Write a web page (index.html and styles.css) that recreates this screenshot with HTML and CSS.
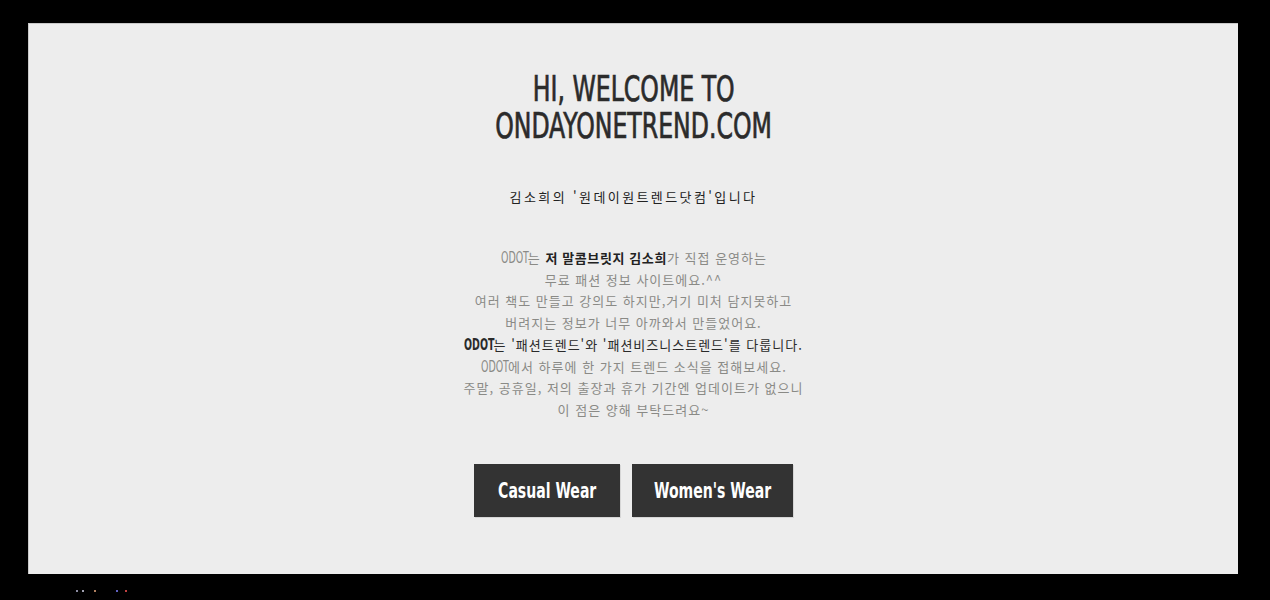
FILE: index.html
```html
<!DOCTYPE html>
<html lang="ko">
<head>
<meta charset="utf-8">
<title>ONDAYONETREND.COM</title>
<link rel="stylesheet" href="styles.css">
</head>
<body>
<main class="panel">
  <h1 class="title"><span>HI, WELCOME TO</span><span>ONDAYONETREND.COM</span></h1>
  <p class="sub">김소희의 '원데이원트렌드닷컴'입니다</p>
  <div class="intro">
    <p><span class="odot">ODOT</span>는 <b>저 말콤브릿지 김소희</b>가 직접 운영하는</p>
    <p>무료 패션 정보 사이트에요.^^</p>
    <p>여러 책도 만들고 강의도 하지만,거기 미처 담지못하고</p>
    <p>버려지는 정보가 너무 아까와서 만들었어요.</p>
    <p class="dark"><span class="odot bold">ODOT</span>는 '패션트렌드'와 '패션비즈니스트렌드'를 다룹니다.</p>
    <p><span class="odot">ODOT</span>에서 하루에 한 가지 트렌드 소식을 접해보세요.</p>
    <p>주말, 공휴일, 저의 출장과 휴가 기간엔 업데이트가 없으니</p>
    <p>이 점은 양해 부탁드려요~</p>
  </div>
  <nav class="buttons">
    <a class="btn btn-casual" href="#"><span>Casual Wear</span></a>
    <a class="btn btn-women" href="#"><span>Women's Wear</span></a>
  </nav>
</main>
<footer class="foot"><i class="d d1"></i><i class="d d2"></i><i class="d d3"></i><i class="d d4"></i><i class="d d5"></i></footer>
</body>
</html>
```

FILE: styles.css
```css
html, body { margin: 0; padding: 0; }
body {
  background: #000;
  width: 1270px;
  height: 600px;
  overflow: hidden;
  font-family: "Noto Sans CJK KR", "Noto Sans", sans-serif;
}
.panel {
  box-sizing: border-box;
  margin: 23px 0 0 28px;
  width: 1210px;
  height: 551px;
  background: #ededed;
  border-top: 1px solid #c9c9c9;
  border-left: 1px solid #c9c9c9;
  display: flex;
  flex-direction: column;
  align-items: center;
  padding-top: 47px;
}
.title {
  margin: 0;
  display: flex;
  flex-direction: column;
  align-items: center;
  font-family: "DejaVu Sans Condensed", "DejaVu Sans", sans-serif;
  font-stretch: condensed;
  font-weight: normal;
  font-size: 35px;
  line-height: 37px;
  color: #2b2b2b;
  -webkit-text-stroke: 0.7px #2b2b2b;
}
.title span { display: block; transform: scaleX(0.75); white-space: nowrap; }
.sub {
  margin: 42px 0 0;
  font-size: 13px;
  line-height: 20px;
  letter-spacing: 2.4px;
  color: #222;
}
.intro {
  margin-top: 40px;
  text-align: center;
  font-size: 13px;
  line-height: 21.7px;
  letter-spacing: 1px;
  color: #8a8a86;
}
.intro p { margin: 0; white-space: nowrap; }
.intro b { color: #222; font-weight: bold; letter-spacing: 0.6px; }
.intro .dark { color: #2a2a2a; }
.odot {
  font-family: "DejaVu Sans Condensed", sans-serif;
  font-stretch: condensed;
  font-size: 15px;
  display: inline-block;
  transform: scaleX(0.7);
  transform-origin: right center;
  margin-left: -11px;
  margin-right: -1px;
  letter-spacing: 0;
  line-height: 1;
}
.odot.bold { font-weight: bold; margin-left: -13px; }
.buttons {
  margin-top: 43px;
  display: flex;
  gap: 12px;
}
.btn {
  display: flex;
  align-items: center;
  justify-content: center;
  height: 53px;
  background: #333;
  color: #fff;
  text-decoration: none;
  font-family: "DejaVu Sans Condensed", sans-serif;
  font-stretch: condensed;
  font-weight: bold;
  font-size: 22px;
  box-shadow: 1px 1px 0 #d6d6d6;
}
.btn span { display: block; transform: scaleX(0.71); white-space: nowrap; }
.btn-casual { width: 146px; }
.btn-women { width: 161px; }
.foot {
  display: flex;
  gap: 4px;
  padding: 16px 0 0 76px;
}
.d { display: block; width: 2px; height: 2px; }
.d1 { background: #8a8aa0; }
.d2 { background: #a0a0b0; margin-right: 6px; }
.d3 { background: #b08060; margin-right: 16px; }
.d4 { background: #6060c0; margin-right: 3px; }
.d5 { background: #c04040; }
```
